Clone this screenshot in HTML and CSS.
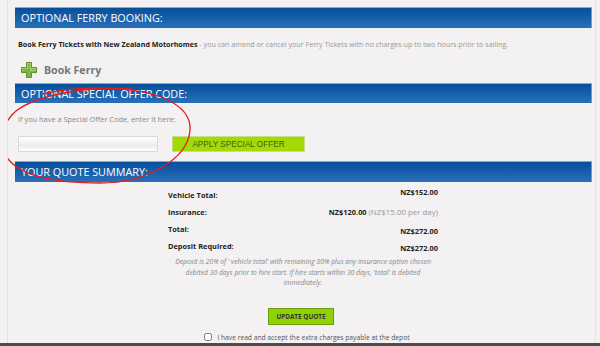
FILE: index.html
```html
<!DOCTYPE html>
<html lang="en">

<head>
    <meta charset="UTF-8">
    <meta name="viewport" content="width=device-width, initial-scale=1.0">
    <title>Quote - Ferry and Special Offer</title>
    <link rel="stylesheet" href="styles.css">
</head>

<body>
    <div class="page">
        <div class="panel">
            <h2 class="bar">OPTIONAL FERRY BOOKING:</h2>
            <p class="ferry-info"><b>Book Ferry Tickets with New Zealand Motorhomes</b> - you can amend or cancel your Ferry Tickets with no charges up to two hours prior to sailing.</p>
            <div class="book-ferry">
                <svg class="plus" width="16" height="16" viewBox="0 0 16 16">
                    <path d="M5.5 0.5h5v5h5v5h-5v5h-5v-5h-5v-5h5z" fill="#7cb342" stroke="#5d8f2e" stroke-width="1"/>
                    <path d="M6.5 1.5h3v5h5v2h-5v-2M6.5 1.5v5h-5v2" fill="none" stroke="#a5d46e" stroke-width="1"/>
                </svg>
                <span>Book Ferry</span>
            </div>

            <h2 class="bar bar-offer">OPTIONAL SPECIAL OFFER CODE:</h2>
            <p class="offer-info">If you have a Special Offer Code, enter it here:</p>
            <div class="offer-row">
                <input type="text" class="offer-input">
                <button class="apply">APPLY SPECIAL OFFER</button>
            </div>

            <h2 class="bar bar-summary">YOUR QUOTE SUMMARY:</h2>
            <div class="summary">
                <div class="row"><span>Vehicle Total:</span><span class="up">NZ$152.00</span></div>
                <div class="row"><span>Insurance:</span><span>NZ$120.00 <em class="per-day">(NZ$15.00 per day)</em></span></div>
                <div class="row"><span>Total:</span><span class="down">NZ$272.00</span></div>
                <div class="row"><span>Deposit Required:</span><span class="down">NZ$272.00</span></div>
                <p class="note">Deposit is 20% of ' vehicle total' with remaining 80% plus any insurance option chosen debited 30 days prior to hire start. If hire starts within 30 days, 'total' is debited immediately.</p>
            </div>
            <div class="update-box">
                <button class="update">UPDATE QUOTE</button>
            </div>
            <label class="agree">
                <input type="checkbox">
                <span>I have read and accept the extra charges payable at the depot</span>
            </label>
        </div>

        <!-- red pen circle drawn on the screenshot -->
        <svg class="scribble" width="200" height="110" viewBox="0 0 200 110">
            <path d="M42 14 C80 5 140 6 168 20 C182 27 191 36 190 50 C188 80 145 103 100 103 C55 103 18 96 6 76 C-1 62 1 44 16 31 C38 14 90 6 132 9" fill="none" stroke="#e0201c" stroke-width="1.3"/>
        </svg>
    </div>
    <div class="footer"></div>
</body>

</html>
```

FILE: styles.css
```css
* {
    margin: 0;
    padding: 0;
    box-sizing: border-box;
}

body {
    background-color: #f3f1f1;
    font-family: "Open Sans", "DejaVu Sans", sans-serif;
    color: #333;
    width: 600px;
    height: 346px;
    overflow: hidden;
}

.page {
    position: relative;
    height: 343px;
    overflow: hidden;
    margin-left: 7px;
    border-left: 1px solid #e3e1e1;
}

.panel {
    width: 588px;
    padding: 7px 0 0 7px;
    border-right: 1px solid #e6e4e4;
    height: 343px;
}

.bar {
    height: 21px;
    width: 577px;
    line-height: 20px;
    padding-left: 6px;
    font-size: 10.8px;
    font-weight: 400;
    color: #fff;
    border-top: 1px solid #9aa5b3;
    border-right: 1px solid #6d9ccc;
    background: linear-gradient(#064f9c, #2a70b9);
}

.ferry-info {
    margin: 11px 0 0 3px;
    font-size: 7.15px;
    line-height: 10px;
    color: #999;
}

.ferry-info b {
    color: #222;
}

.book-ferry {
    display: flex;
    align-items: center;
    gap: 7px;
    margin: 13px 0 0 6px;
    height: 16px;
    font-size: 10.6px;
    font-weight: bold;
    color: #777;
}

.bar-offer {
    margin-top: 5px;
    height: 20px;
}

.offer-info {
    margin: 11px 0 0 3px;
    font-size: 7.4px;
    line-height: 10px;
    color: #888;
}

.offer-row {
    display: flex;
    gap: 14px;
    margin: 12px 0 0 3px;
}

.offer-input {
    width: 140px;
    height: 16px;
    border: 1px solid #d8d6d6;
    background: linear-gradient(#fff, #ececec 60%, #fff);
}

.apply {
    width: 133px;
    height: 16px;
    border: 1px solid #c9df8a;
    background-color: #a2da06;
    color: #4a5a10;
    font-family: "Liberation Sans", Arial, sans-serif;
    font-size: 8.2px;
    cursor: pointer;
}

.bar-summary {
    margin-top: 9px;
}

.summary {
    width: 270px;
    margin: 4px 0 0 153px;
    font-size: 7.4px;
    font-weight: bold;
    color: #222;
}

.row {
    display: flex;
    justify-content: space-between;
    align-items: center;
    height: 17px;
}

.row .up {
    position: relative;
    top: -3px;
}

.row .down {
    position: relative;
    top: 2px;
}

.per-day {
    font-style: normal;
    font-weight: normal;
    font-size: 7.9px;
    color: #999;
}

.note {
    margin-top: 3px;
    padding: 0 4px;
    font-size: 6.75px;
    line-height: 10.5px;
    font-style: italic;
    font-weight: normal;
    text-align: center;
    color: #888;
}

.update-box {
    display: flex;
    justify-content: center;
    margin-top: 19px;
    padding-right: 8px;
}

.update {
    width: 66px;
    height: 17px;
    border: 1px solid #6e9c10;
    background-color: #8fd200;
    color: #333;
    font-family: "Open Sans", sans-serif;
    font-size: 6.4px;
    font-weight: bold;
    cursor: pointer;
}

.agree {
    display: flex;
    align-items: center;
    justify-content: center;
    gap: 5px;
    margin-top: 8px;
    padding-left: 4px;
    font-size: 6.7px;
    color: #555;
}

.agree input {
    width: 8px;
    height: 8px;
}

.scribble {
    position: absolute;
    left: -8px;
    top: 80px;
}

.footer {
    height: 3px;
    background-color: #4e4e4e;
}
```
